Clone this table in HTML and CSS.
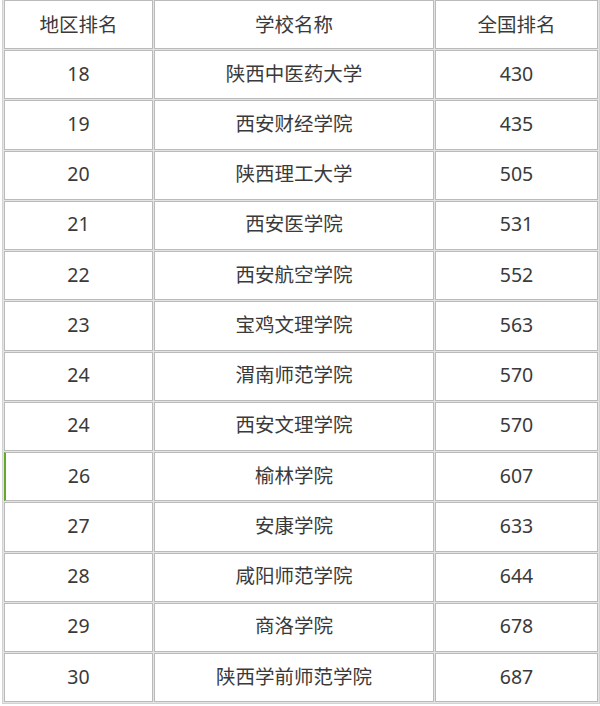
FILE: index.html
```html
<!DOCTYPE html>
<html lang="zh-CN">
<head>
<meta charset="utf-8">
<title>陕西高校排名</title>
<link rel="stylesheet" href="styles.css">
</head>
<body>
<table class="rank">
  <thead>
    <tr><th class="c1">地区排名</th><th class="c2">学校名称</th><th class="c3">全国排名</th></tr>
  </thead>
  <tbody>
    <tr><td class="c1">18</td><td class="c2">陕西中医药大学</td><td class="c3">430</td></tr>
    <tr><td class="c1">19</td><td class="c2">西安财经学院</td><td class="c3">435</td></tr>
    <tr><td class="c1">20</td><td class="c2">陕西理工大学</td><td class="c3">505</td></tr>
    <tr><td class="c1">21</td><td class="c2">西安医学院</td><td class="c3">531</td></tr>
    <tr><td class="c1">22</td><td class="c2">西安航空学院</td><td class="c3">552</td></tr>
    <tr><td class="c1">23</td><td class="c2">宝鸡文理学院</td><td class="c3">563</td></tr>
    <tr><td class="c1">24</td><td class="c2">渭南师范学院</td><td class="c3">570</td></tr>
    <tr><td class="c1">24</td><td class="c2">西安文理学院</td><td class="c3">570</td></tr>
    <tr><td class="c1 mark">26</td><td class="c2">榆林学院</td><td class="c3">607</td></tr>
    <tr><td class="c1">27</td><td class="c2">安康学院</td><td class="c3">633</td></tr>
    <tr><td class="c1">28</td><td class="c2">咸阳师范学院</td><td class="c3">644</td></tr>
    <tr><td class="c1">29</td><td class="c2">商洛学院</td><td class="c3">678</td></tr>
    <tr><td class="c1">30</td><td class="c2">陕西学前师范学院</td><td class="c3">687</td></tr>
  </tbody>
</table>
</body>
</html>
```

FILE: styles.css
```css
html, body {
  margin: 0;
  padding: 0;
  background: #ffffff;
}

.rank {
  margin: -2px 0 0 2px;
  border: 1px solid #d2d2d2;
  border-collapse: separate;
  border-spacing: 1px;
  background: #e4e4e4;
  table-layout: fixed;
  width: 598px;
  font-family: "Noto Sans", "Noto Sans CJK SC", sans-serif;
  font-size: 19.5px;
  line-height: 24px;
  color: #3a3a3a;
}

.rank th,
.rank td {
  box-sizing: border-box;
  background: #ffffff;
  border: 1px solid #bababa;
  padding: 0 0 2px 0;
  text-align: center;
  vertical-align: middle;
  font-weight: normal;
}

.rank th {
  height: 49px;
  padding-bottom: 0;
}

.rank td {
  height: 49.25px;
}

.rank .c1 { width: 149px; }
.rank .c2 { width: 280px; }
.rank .c3 { width: 163px; }

.rank td.mark {
  border-left: 2px solid #62a82a;
}
```
